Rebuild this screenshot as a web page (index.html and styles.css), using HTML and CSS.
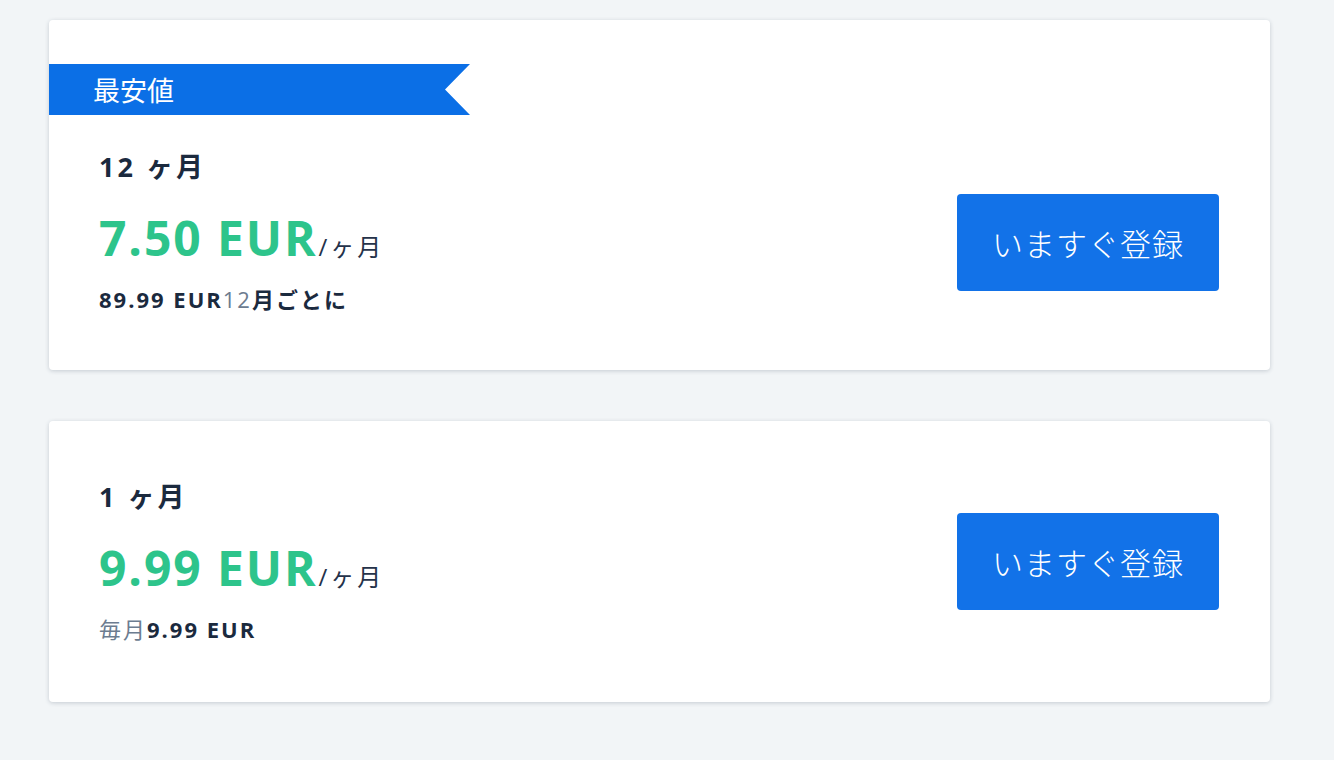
FILE: index.html
```html
<!DOCTYPE html>
<html lang="ja">
  <head>
    <meta charset="utf-8">
    <title>プラン</title>
    <link rel="stylesheet" href="styles.css">
  </head>
  <body>
    <div class="plans">
      <div class="plan">
        <div class="ribbon">最安値</div>
        <div class="plan-row">
          <div class="plan-info plan-info-ribbon">
            <div class="plan-title">12 ヶ月</div>
            <div class="plan-price"><span class="amount">7.50 EUR</span><span class="per">/ヶ月</span></div>
            <div class="plan-sub"><b>89.99 EUR</b><span class="muted">12</span><b>月ごとに</b></div>
          </div>
          <a class="btn" href="#">いますぐ登録</a>
        </div>
      </div>

      <div class="plan">
        <div class="plan-row">
          <div class="plan-info">
            <div class="plan-title">1 ヶ月</div>
            <div class="plan-price"><span class="amount">9.99 EUR</span><span class="per">/ヶ月</span></div>
            <div class="plan-sub"><span class="muted">毎月</span><b>9.99 EUR</b></div>
          </div>
          <a class="btn" href="#">いますぐ登録</a>
        </div>
      </div>
    </div>
  </body>
</html>
```

FILE: styles.css
```css
body {
  margin: 0;
  background-color: #f2f5f7;
  font-family: "Open Sans", "Noto Sans CJK JP", sans-serif;
  color: #1b2a3e;
}

.plans {
  display: flex;
  flex-direction: column;
  gap: 51px;
  padding: 20px 64px 40px 49px;
}

.plan {
  background-color: #ffffff;
  border-radius: 4px;
  box-shadow: 0 1px 4px rgba(40, 60, 80, 0.22);
}

.ribbon {
  margin-top: 44px;
  width: 377px;
  height: 51px;
  line-height: 51px;
  padding-left: 44px;
  background-color: #0b6fe6;
  color: #ffffff;
  font-family: "Noto Sans CJK JP", sans-serif;
  font-size: 27px;
  clip-path: polygon(0 0, 100% 0, calc(100% - 25px) 50%, 100% 100%, 0 100%);
}

.plan-row {
  display: flex;
  align-items: center;
  justify-content: space-between;
  padding: 0 51px 0 50px;
}

.plan-info {
  padding: 60px 0 59px;
}

.plan-info-ribbon {
  padding: 36px 0 57px;
}

.plan-info > div {
  display: flex;
  align-items: baseline;
  white-space: nowrap;
}

.plan-title {
  height: 32px;
  line-height: 32px;
  font-size: 27px;
  font-weight: 700;
  letter-spacing: 3px;
}

.plan-price {
  height: 56px;
  line-height: 56px;
  margin-top: 27px;
}

.amount {
  font-size: 48px;
  font-weight: 700;
  color: #2dc48b;
  letter-spacing: 1.9px;
}

.per {
  font-size: 24px;
  color: #25324a;
  margin-left: 1px;
  letter-spacing: 3px;
}

.plan-sub {
  height: 28px;
  line-height: 28px;
  margin-top: 19px;
  font-size: 22px;
  letter-spacing: 2px;
}

.plan-sub b {
  font-weight: 700;
}

.muted {
  color: #6c7c90;
}

.btn {
  display: flex;
  align-items: center;
  justify-content: center;
  width: 262px;
  height: 97px;
  border-radius: 4px;
  background-color: #1272e8;
  color: #ffffff;
  font-family: "Noto Sans CJK JP", sans-serif;
  font-size: 31px;
  font-weight: 300;
  letter-spacing: 1px;
  text-decoration: none;
}
```
